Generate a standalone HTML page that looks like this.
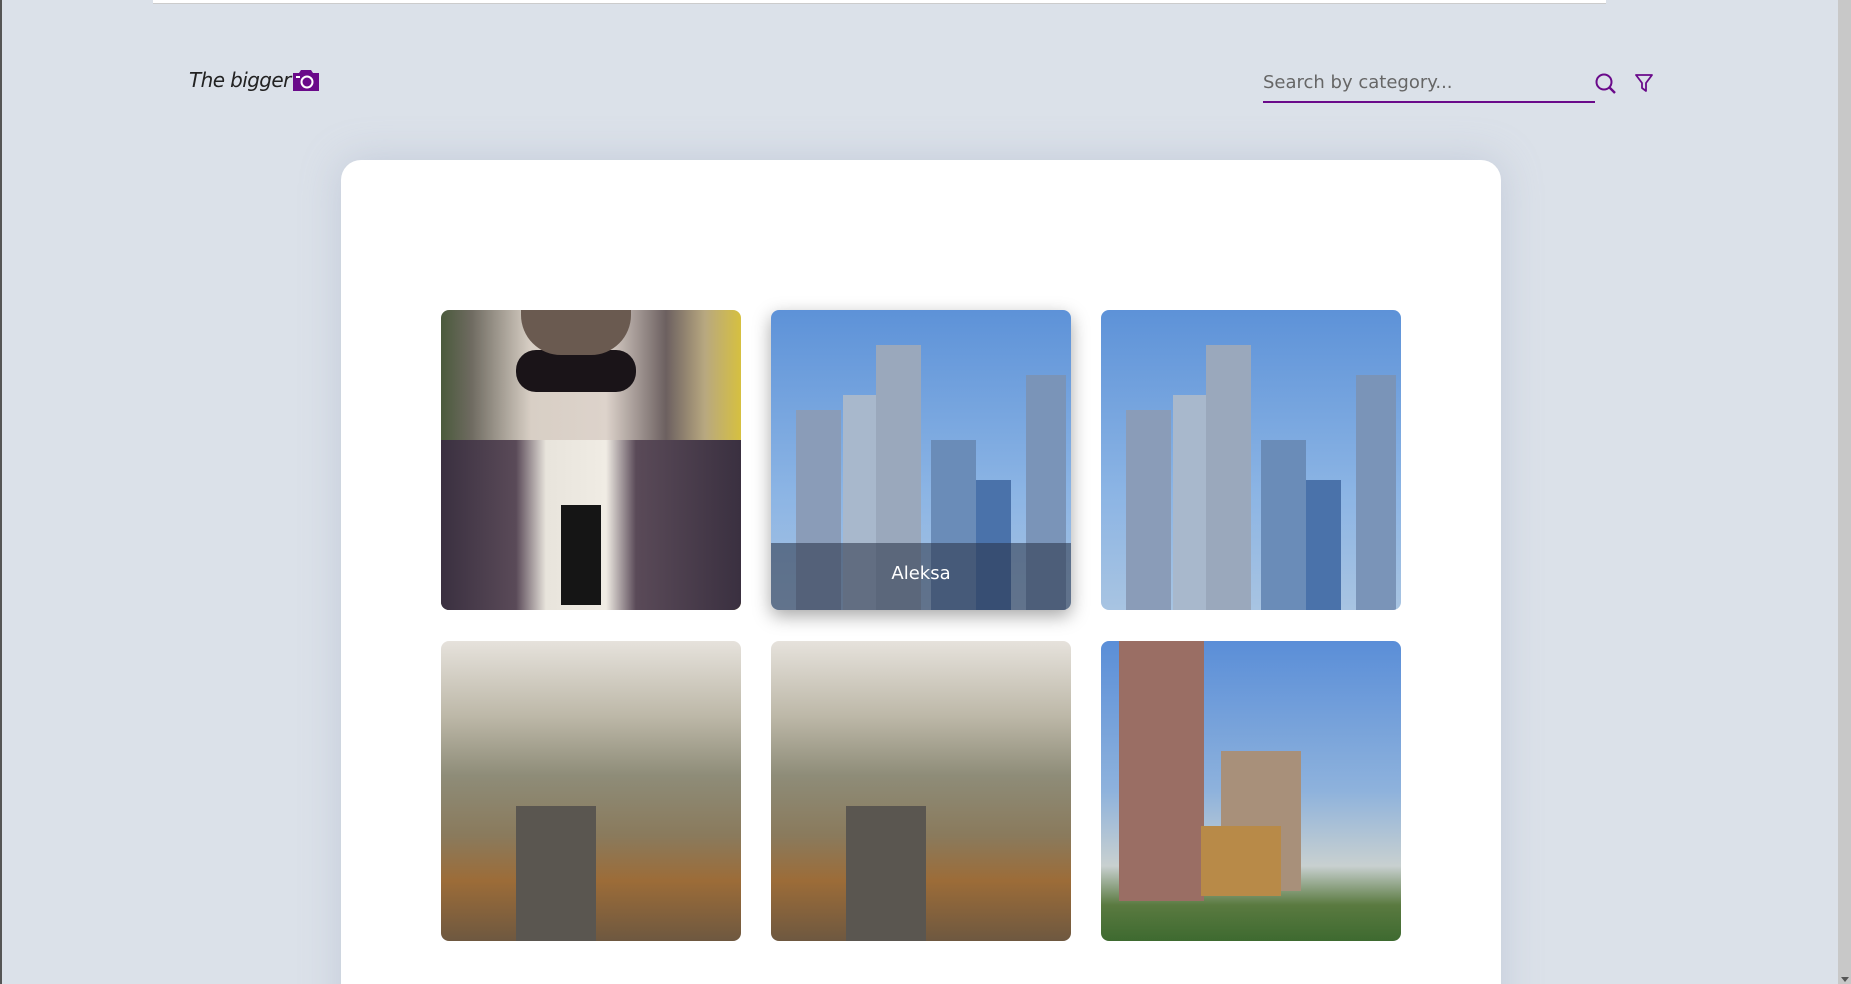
<!DOCTYPE html>
<html><head><meta charset="utf-8"><style>
*{margin:0;padding:0;box-sizing:border-box}
html,body{width:1851px;height:984px;overflow:hidden}
body{background:#dbe1e9;font-family:"Liberation Sans",sans-serif;position:relative}
.lb{position:absolute;left:0;top:0;width:2px;height:984px;background:#555}
.tb{position:absolute;left:153px;top:0;width:1453px;height:4px;background:#fff;border-bottom:1px solid #ccc}
.sb{position:absolute;right:0;top:0;width:13px;height:984px;background:#c8c8c8}
.logo{position:absolute;left:189px;top:68px;font-family:"DejaVu Sans",sans-serif;font-style:italic;font-size:20px;color:#222;letter-spacing:-0.6px;white-space:nowrap}
.cam{position:absolute;left:293px;top:70px}
.search{position:absolute;left:1263px;top:72px;width:332px;height:31px;border-bottom:2px solid #6a0a8a;font-family:"DejaVu Sans",sans-serif;font-size:18px;color:#666}
.card{position:absolute;left:341px;top:160px;width:1160px;height:900px;background:#fff;border-radius:20px;box-shadow:0 0 40px rgba(150,160,190,.35)}
.img{position:absolute;width:300px;height:300px;border-radius:8px;overflow:hidden}
.p1{left:441px;top:310px;background:linear-gradient(90deg,#4a5a3c 0%,#6e6a60 10%,#d8cfc5 30%,#ddd3cb 55%,#6c6060 75%,#b8a880 88%,#d6c040 100%)}
.sky{background:linear-gradient(180deg,#5d92d8,#8bb4e4 60%,#a8c4e2)}
.p2{left:771px;top:310px;box-shadow:0 6px 18px rgba(0,0,0,.35)}
.p3{left:1101px;top:310px}
.wall{background:linear-gradient(180deg,#e6e2dc 0%,#bdb8a8 25%,#8e8c78 45%,#8a7a5c 65%,#9c6c38 80%,#6e5840 100%)}
.p4{left:441px;top:641px}.p5{left:771px;top:641px}
.p6{left:1101px;top:641px;background:linear-gradient(180deg,#5a8ed8 0%,#8eb2dc 50%,#c8d0d0 75%,#5a7a40 88%,#3e6a30 100%)}
.b{position:absolute;bottom:0}
.ov{position:absolute;left:0;bottom:0;width:300px;height:67px;background:rgba(40,50,70,.55);color:#fff;font-family:"DejaVu Sans",sans-serif;font-size:18px;text-align:center;line-height:62px}
</style></head><body>
<div class="lb"></div><div class="tb"></div>
<div class="sb"><div style="position:absolute;bottom:2px;left:3px;width:0;height:0;border-left:4px solid transparent;border-right:4px solid transparent;border-top:5px solid #555"></div></div>
<div class="logo">The bigger</div>
<svg class="cam" width="26" height="21" viewBox="0 0 26 21"><path d="M8 0h10l2 3h6v18H0V3h6z" fill="#6a0a8a"/><circle cx="14" cy="12" r="5.5" fill="none" stroke="#fff" stroke-width="2"/><rect x="3" y="6" width="4" height="2" fill="#fff"/></svg>
<div class="search">Search by category...</div>
<svg style="position:absolute;left:1594px;top:72px" width="24" height="24" viewBox="0 0 24 24"><circle cx="10" cy="10" r="7.5" fill="none" stroke="#6a0a8a" stroke-width="2"/><path d="M15.5 15.5L21 21" stroke="#6a0a8a" stroke-width="2.4"/></svg>
<div style="position:absolute;left:1634px;top:73px"><svg width="20" height="20" viewBox="0 0 20 20"><path d="M2 2h16l-6 8v8l-4-3v-5z" fill="none" stroke="#6a0a8a" stroke-width="1.8" stroke-linejoin="round"/></svg></div>
<div class="card"></div>
<div class="img p1"><div style="position:absolute;left:75px;top:40px;width:120px;height:42px;background:#1a1418;border-radius:20px"></div><div style="position:absolute;left:80px;top:0;width:110px;height:45px;background:#6a5a50;border-radius:0 0 40px 40px"></div><div style="position:absolute;left:0;top:130px;width:300px;height:170px;background:linear-gradient(90deg,#3a3040,#5a4a58 25%,#e8e4dc 35%,#f0ece4 55%,#5a4a58 65%,#3a3040)"></div><div style="position:absolute;left:120px;top:195px;width:40px;height:100px;background:#151515"></div></div>
<div class="img p2 sky">
<div class="b" style="left:25px;width:45px;height:200px;background:#8a9cb8"></div>
<div class="b" style="left:72px;width:35px;height:215px;background:#a8b8cc"></div>
<div class="b" style="left:105px;width:45px;height:265px;background:#9aa8bc"></div>
<div class="b" style="left:160px;width:45px;height:170px;background:#6a8cb8"></div>
<div class="b" style="left:205px;width:35px;height:130px;background:#4a72aa"></div>
<div class="b" style="left:255px;width:40px;height:235px;background:#7a94b8"></div>
<div class="ov">Aleksa</div></div>
<div class="img p3 sky">
<div class="b" style="left:25px;width:45px;height:200px;background:#8a9cb8"></div>
<div class="b" style="left:72px;width:35px;height:215px;background:#a8b8cc"></div>
<div class="b" style="left:105px;width:45px;height:265px;background:#9aa8bc"></div>
<div class="b" style="left:160px;width:45px;height:170px;background:#6a8cb8"></div>
<div class="b" style="left:205px;width:35px;height:130px;background:#4a72aa"></div>
<div class="b" style="left:255px;width:40px;height:235px;background:#7a94b8"></div></div>
<div class="img p4 wall"><div class="b" style="left:75px;width:80px;height:135px;background:#5a5650"></div></div>
<div class="img p5 wall"><div class="b" style="left:75px;width:80px;height:135px;background:#5a5650"></div></div>
<div class="img p6"><div class="b" style="left:18px;width:85px;height:300px;bottom:40px;background:#9a6e64"></div><div class="b" style="left:120px;width:80px;height:140px;bottom:50px;background:#a8907a"></div><div class="b" style="left:100px;width:80px;height:70px;bottom:45px;background:#b88a48"></div></div>
</body></html>
